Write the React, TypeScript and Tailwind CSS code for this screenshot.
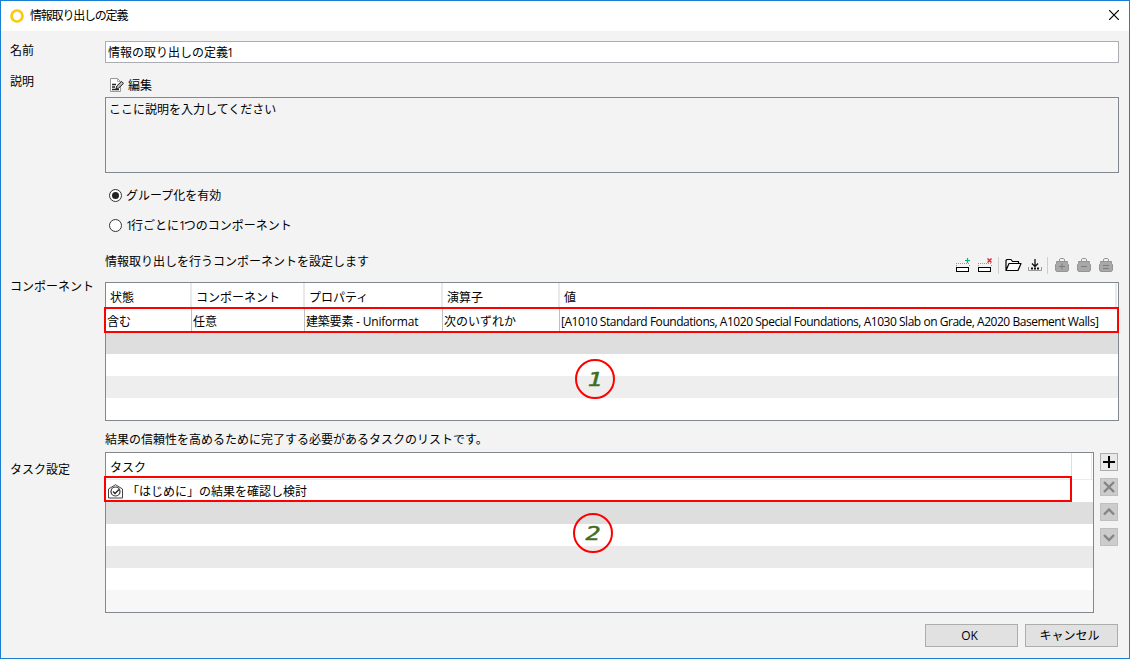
import { useState } from 'react'
import type { ReactNode } from 'react'

interface Column {
  title: string
  value: string
  width: string
  tracking?: string
}

const columns: Column[] = [
  { title: '状態', value: '含む', width: 'w-[86px]' },
  { title: 'コンポーネント', value: '任意', width: 'w-[113px]' },
  { title: 'プロパティ', value: '建築要素 - Uniformat', width: 'w-[138px]', tracking: 'tracking-[-0.2px]' },
  { title: '演算子', value: '次のいずれか', width: 'w-[117px]' },
  {
    title: '値',
    value: '[A1010 Standard Foundations, A1020 Special Foundations, A1030 Slab on Grade, A2020 Basement Walls]',
    width: 'flex-1',
    tracking: 'tracking-[-0.465px]',
  },
]

function Label({ children, className = '' }: { children: ReactNode; className?: string }) {
  return <div className={`w-[95px] shrink-0 leading-5 ${className}`}>{children}</div>
}

function Radio({ label, checked, onSelect }: { label: ReactNode; checked: boolean; onSelect: () => void }) {
  return (
    <button type="button" role="radio" aria-checked={checked} onClick={onSelect} className="flex h-[13px] items-center gap-1">
      <svg width="13" height="13" viewBox="0 0 13 13">
        <circle cx="6.5" cy="6.5" r="6" fill="#fff" stroke="#333" />
        {checked && <circle cx="6.5" cy="6.5" r="3.5" fill="#222" />}
      </svg>
      <span className="leading-[14px]">{label}</span>
    </button>
  )
}

function RowIcon({ remove = false }: { remove?: boolean }) {
  return (
    <svg width="15" height="18" viewBox="0 0 15 18">
      <path d="M0 7.5h14M.5 9v2M13.5 9v2" stroke="#999" strokeDasharray="1 1" fill="none" />
      <rect x=".5" y="11.5" width="12" height="4" fill="#fff" stroke="#000" />
      {remove ? (
        <path d="M9.5 2.5l4 4M13.5 2.5l-4 4" stroke="#e0242c" strokeWidth="1.4" />
      ) : (
        <path d="M11.5 2v5M9 4.5h5" stroke="#00b96b" strokeWidth="1.2" />
      )}
    </svg>
  )
}

function BagIcon({ sign }: { sign: string }) {
  return (
    <svg width="14" height="16" viewBox="0 0 14 16">
      <path d="M4.5 4.5V3C4.5 1.5 5.3 1.5 7 1.5s2.5 0 2.5 1.5v1.5" stroke="#939393" fill="none" />
      <path d="M1.5 4.5h11v2l1 1V13l-1 1.5h-11L.5 13V7.5l1-1z" fill="#a8a8a8" stroke="#959595" />
      <path d={sign} stroke="#7c7c7c" fill="none" />
    </svg>
  )
}

function Marker({ n, className }: { n: number; className: string }) {
  return (
    <div
      className={`absolute flex h-10 w-10 items-center justify-center rounded-full border-2 border-[#ff0000] font-['DejaVu_Sans_Mono',monospace] text-[20px] italic leading-none text-[#3f6f1c] [-webkit-text-stroke:0.5px_#3f6f1c] ${className}`}
    >
      <span className="scale-x-125">{n}</span>
    </div>
  )
}

function SideButton({ d, disabled = false }: { d: string; disabled?: boolean }) {
  return (
    <button
      type="button"
      disabled={disabled}
      className={`flex h-[18px] w-[18px] items-center justify-center border ${disabled ? 'border-[#bfbfbf] bg-[#cccccc] text-[#858585]' : 'border-[#adadad] bg-[#e8e8e8] text-black'}`}
    >
      <svg width="16" height="16" viewBox="0 0 16 16" className="shrink-0">
        <path d={d} stroke="currentColor" strokeWidth={disabled ? 2.4 : 2} fill="none" />
      </svg>
    </button>
  )
}

export default function App() {
  const [grouped, setGrouped] = useState(true)

  return (
    <div className="flex h-[659px] w-[1130px] flex-col border border-[#1a7fd2] bg-[#f3f3f3] font-['Open_Sans','Noto_Sans_CJK_JP',sans-serif] text-[12px] text-black">
      {/* Title bar */}
      <div className="flex h-[30px] shrink-0 items-center bg-white pl-[9px] pr-[10px]">
        <svg width="14" height="14" viewBox="0 0 14 14" className="-mt-px">
          <circle cx="7" cy="7" r="5.5" stroke="#fdc90a" strokeWidth="2.7" fill="none" />
        </svg>
        <span className="ml-[6px] flex-1 tracking-[-1.2px]">情報取り出しの定義</span>
        <svg width="10" height="10" viewBox="0 0 10 10" className="-mt-0.5">
          <path d="M0 0l10 10M10 0L0 10" stroke="#000" strokeWidth="1.2" />
        </svg>
      </div>

      <div className="flex flex-1 flex-col pl-[9px] pr-[10px] pt-[10px]">
        {/* Name */}
        <div className="flex h-8">
          <Label>名前</Label>
          <div className="flex h-[22px] flex-1 items-center border border-[#abadb3] bg-white pl-[2px] pt-px">
            情報の取り出しの定義<span className="-ml-px">1</span>
          </div>
        </div>

        {/* Description */}
        <div className="flex">
          <Label className="-mt-px">説明</Label>
          <div className="flex-1">
            <div className="flex h-6 items-center gap-1 pl-[5px]">
              <svg width="14" height="14" viewBox="0 0 14 14">
                <path d="M.5.5h7l3 3v10H.5z" fill="#fff" stroke="#999" />
                <path d="M7.5.5v3h3" fill="none" stroke="#aaa" />
                <path d="M2 6.5h4M2 9h3M2 11.5h7" stroke="#222" strokeWidth="1.3" />
                <path d="M6 10.8l.7-2.7 4.8-4.7 2 2-4.8 4.7z" fill="#bbb" stroke="#222" />
              </svg>
              <span className="pt-0.5">編集</span>
            </div>
            <div className="h-[76px] border border-[#828790] pl-[3px] pt-[3px] leading-[18px]">ここに説明を入力してください</div>
            <div role="radiogroup" className="flex flex-col gap-[17px] pl-1 pt-4">
              <Radio label="グループ化を有効" checked={grouped} onSelect={() => setGrouped(true)} />
              <Radio
                label={
                  <>
                    <span className="tracking-[-2px]">1</span>行ごとに<span className="tracking-[-2px]">1</span>つのコンポーネント
                  </>
                }
                checked={!grouped}
                onSelect={() => setGrouped(false)}
              />
            </div>
          </div>
        </div>

        {/* Components */}
        <div className="mt-4 flex">
          <Label className="mt-[29px]">コンポーネント</Label>
          <div className="flex-1">
            <div className="flex h-[34px] justify-between">
              <span className="leading-7">情報取り出しを行うコンポーネントを設定します</span>
              <div className="flex h-[34px] items-center pr-[5px]">
                <RowIcon />
                <span className="w-[7px]" />
                <RowIcon remove />
                <span className="mx-[5px] h-[17px] w-px bg-[#cfcfcf]" />
                <svg width="17" height="14" viewBox="0 0 17 14" className="ml-px">
                  <path d="M1 12.5V2.5l1-1h4l1.5 2h6v2M1 12.5L4 5.5h12l-3 7z" fill="#fff" stroke="#000" strokeWidth="1.2" strokeLinejoin="round" />
                </svg>
                <svg width="14" height="14" viewBox="0 0 14 14" className="ml-[6px]">
                  <path d="M7 1v7M4 5.5l3 3 3-3" stroke="#111" strokeWidth="1.3" fill="none" />
                  <path d="M.5 9v3.5h13V9" stroke="#999" fill="none" />
                  <path d="M3 10.5h8" stroke="#111" strokeWidth="2" strokeDasharray="2 1" />
                </svg>
                <span className="ml-[5px] mr-[7px] h-[17px] w-px bg-[#cfcfcf]" />
                <div className="mr-px flex gap-2">
                  <BagIcon sign="M7 6.5v6M4 9.5h6" />
                  <BagIcon sign="M4 9.5h6" />
                  <BagIcon sign="M4 8.5h6M4 11.5h6" />
                </div>
              </div>
            </div>
            <div className="relative h-[139px] border border-[#828790] bg-white">
              <div className="flex h-[26px] pr-px">
                {columns.map((col) => (
                  <div key={col.title} className={`border-r-2 border-[#e9e9e9] pl-1 leading-[30px] ${col.width}`}>
                    {col.title}
                  </div>
                ))}
              </div>
              <div className="flex h-6">
                {columns.map((col) => (
                  <div
                    key={col.title}
                    className={`whitespace-nowrap border-r border-[#c0c0c0] pl-px leading-[26px] last:border-r-0 ${col.width} ${col.tracking ?? ''}`}
                  >
                    {col.value}
                  </div>
                ))}
              </div>
              <div className="h-[21px] bg-[#dedede]" />
              <div className="mt-[22px] h-[22px] bg-[#eeeeee]" />
              <div className="absolute -left-[2px] top-6 h-[26px] w-[1015px] border-2 border-[#ff0000]" />
              <Marker n={1} className="left-[469px] top-[76px]" />
            </div>
          </div>
        </div>

        {/* Tasks */}
        <div className="mt-[10px] flex">
          <Label className="mt-[29px]">タスク設定</Label>
          <div className="flex-1">
            <div className="h-[21px] leading-[18px]">結果の信頼性を高めるために完了する必要があるタスクのリストです。</div>
            <div className="flex gap-[6px]">
              <div className="relative h-[161px] w-[989px] border border-[#828790] bg-white">
                <div className="flex h-[27px] border-b border-[#ececec] pr-px">
                  <div className="w-[966px] border-r border-[#dedede] pl-1 leading-[30px]">タスク</div>
                  <div className="flex-1 border-r border-[#e9e9e9]" />
                </div>
                <div className="flex h-[22px] items-center pl-[2px]">
                  <svg width="15" height="15" viewBox="0 0 15 15">
                    <path d="M.5 14V5l7-4.3 7 4.3v9z" fill="#fff" stroke="#444" strokeLinejoin="round" />
                    <circle cx="7.5" cy="7.5" r="4.5" fill="none" stroke="#333" strokeWidth="1.2" />
                    <path d="M5 7.5l2 2 4-4" fill="none" stroke="#222" strokeWidth="1.3" />
                  </svg>
                  <span className="ml-1 pt-0.5">「はじめに」の結果を確認し検討</span>
                </div>
                <div className="h-[22px] bg-[#dedede]" />
                <div className="mt-[22px] h-[22px] bg-[#eaeaea]" />
                <div className="mt-[22px] h-[22px] bg-[#f7f7f7]" />
                <div className="absolute -left-[2px] top-[23px] h-[26px] w-[968px] border-2 border-[#ff0000]" />
                <Marker n={2} className="left-[467px] top-[60px]" />
              </div>
              <div className="flex flex-col gap-[7px] pt-px">
                <SideButton d="M8 2v12M2 8h12" />
                <SideButton disabled d="M3 3l10 10M13 3L3 13" />
                <SideButton disabled d="M3 10.5l5-5 5 5" />
                <SideButton disabled d="M3 6l5 5 5-5" />
              </div>
            </div>
          </div>
        </div>

        {/* Footer */}
        <div className="mt-[11px] flex justify-end gap-[7px] pr-px">
          <button type="button" className="h-[23px] w-[93px] border border-[#adadad] bg-[#e1e1e1] pr-1 leading-[21px]">OK</button>
          <button type="button" className="h-[23px] w-[93px] border border-[#adadad] bg-[#e1e1e1] pr-1 leading-[22px]">キャンセル</button>
        </div>
      </div>
    </div>
  )
}
